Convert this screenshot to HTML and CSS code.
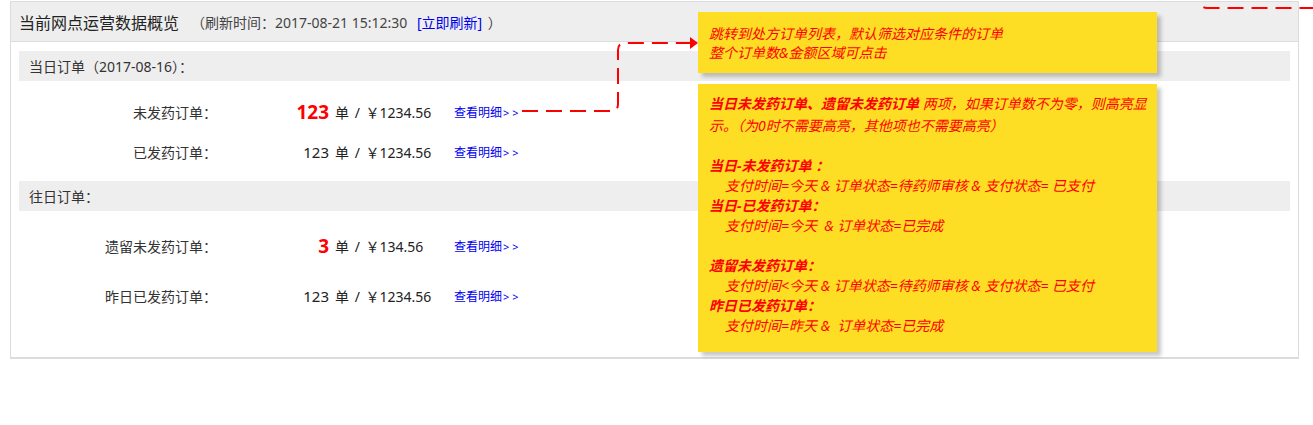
FILE: index.html
```html
<!DOCTYPE html>
<html lang="zh-CN">
<head>
<meta charset="utf-8">
<title>当前网点运营数据概览</title>
<link rel="stylesheet" href="styles.css">
</head>
<body>
<div class="page">
  <div class="panel">
    <div class="panel-head">
      <span class="title">当前网点运营数据概览</span>
      <span class="refresh">（刷新时间：2017-08-21 15:12:30 <a class="refresh-link">[立即刷新]</a> ）</span>
    </div>
    <div class="panel-body">
      <div class="section-bar">当日订单（2017-08-16）：</div>
      <div class="rows rows-today">
        <div class="row">
          <span class="label">未发药订单：</span>
          <span class="count hot">123</span>
          <span class="amount">单 / ￥1234.56</span>
          <a class="detail">查看明细<span class="gt">&gt; &gt;</span></a>
        </div>
        <div class="row">
          <span class="label">已发药订单：</span>
          <span class="count">123</span>
          <span class="amount">单 / ￥1234.56</span>
          <a class="detail">查看明细<span class="gt">&gt; &gt;</span></a>
        </div>
      </div>
      <div class="section-bar">往日订单：</div>
      <div class="rows rows-past">
        <div class="row">
          <span class="label">遗留未发药订单：</span>
          <span class="count hot">3</span>
          <span class="amount">单 / ￥134.56</span>
          <a class="detail">查看明细<span class="gt">&gt; &gt;</span></a>
        </div>
        <div class="row">
          <span class="label">昨日已发药订单：</span>
          <span class="count">123</span>
          <span class="amount">单 / ￥1234.56</span>
          <a class="detail">查看明细<span class="gt">&gt; &gt;</span></a>
        </div>
      </div>
    </div>
  </div>

  <svg class="connectors" width="1313" height="425" viewBox="0 0 1313 425">
    <path d="M522 111 H611 Q618 111 618 104 V50 Q618 43 625 43 H690" fill="none" stroke="#ff0000" stroke-width="2" stroke-dasharray="16 8"/>
    <polygon points="690,37 698,43 690,49" fill="#ff0000"/>
    <path d="M1201 0 V2 Q1201 8 1207 8 H1313" fill="none" stroke="#ff0000" stroke-width="2" stroke-dasharray="16 8" stroke-dashoffset="-8"/>
  </svg>

  <div class="note note-1">
    <div>跳转到处方订单列表，默认筛选对应条件的订单</div>
    <div>整个订单数&amp;金额区域可点击</div>
  </div>

  <div class="note note-2">
    <div class="first"><b>当日未发药订单、遗留未发药订单</b> 两项，如果订单数不为零，则高亮显</div>
    <div>示。（为0时不需要高亮，其他项也不需要高亮）</div>
    <div class="blank"></div>
    <div><b>当日-未发药订单 ：</b></div>
    <div class="indent">支付时间=今天 &amp; 订单状态=待药师审核 &amp; 支付状态= 已支付</div>
    <div><b>当日-已发药订单：</b></div>
    <div class="indent">支付时间=今天 &nbsp;&amp; 订单状态=已完成</div>
    <div class="blank"></div>
    <div><b>遗留未发药订单：</b></div>
    <div class="indent">支付时间&lt;今天 &amp; 订单状态=待药师审核 &amp; 支付状态= 已支付</div>
    <div><b>昨日已发药订单：</b></div>
    <div class="indent">支付时间=昨天 &amp; &nbsp;订单状态=已完成</div>
  </div>
</div>
</body>
</html>
```

FILE: styles.css
```css
html, body {
  margin: 0;
  padding: 0;
  background: #ffffff;
}

body {
  font-family: "Noto Sans", "Noto Sans CJK SC", sans-serif;
  color: #333333;
}

.page {
  position: relative;
  width: 1313px;
  height: 425px;
  padding-top: 1px;
  box-sizing: border-box;
}

.panel {
  margin-left: 10px;
  width: 1289px;
  box-sizing: border-box;
  border: 1px solid #dcdcdc;
  border-bottom-width: 2px;
}

.panel-head {
  height: 39px;
  background: #eeeeee;
  border-bottom: 1px solid #dcdcdc;
  display: flex;
  align-items: center;
  padding-left: 8px;
}

.title {
  font-size: 16px;
  color: #222222;
  margin-right: 12px;
}

.refresh {
  font-size: 14px;
  color: #444444;
}

.refresh-link {
  color: #0000ee;
  margin-left: 6px;
  margin-right: 2px;
}

.panel-body {
  padding: 9px 8px 36px 8px;
}

.section-bar {
  height: 30px;
  background: #eeeeee;
  display: flex;
  align-items: center;
  padding-left: 10px;
  font-size: 14px;
  color: #333333;
}

.rows-today {
  padding-top: 11px;
  padding-bottom: 9px;
}

.rows-past {
  padding-top: 10px;
}

.rows-today .row {
  height: 40px;
}

.rows-past .row {
  height: 50px;
}

.row {
  display: flex;
  align-items: center;
}

.label {
  width: 198px;
  text-align: right;
  font-size: 14px;
  color: #333333;
}

.count {
  width: 112px;
  text-align: right;
  font-size: 15px;
  color: #222222;
}

.count.hot {
  color: #ff0000;
  font-weight: bold;
  font-size: 19px;
}

.amount {
  width: 125px;
  padding-left: 6px;
  box-sizing: border-box;
  font-size: 14px;
  color: #222222;
  white-space: nowrap;
  word-spacing: 2px;
}

.detail {
  font-size: 12px;
  color: #0000ee;
  white-space: nowrap;
}

.gt {
  font-size: 11px;
  margin-left: 1px;
}

.connectors {
  position: absolute;
  left: 0;
  top: 0;
  pointer-events: none;
}

.note {
  position: absolute;
  left: 698px;
  width: 459px;
  box-sizing: border-box;
  background: #fede24;
  box-shadow: 4px 4px 4px rgba(0, 0, 0, 0.22);
  color: #ff0000;
  font-style: italic;
  font-size: 14px;
  line-height: 20px;
  padding-left: 11px;
  white-space: nowrap;
}

.note-1 {
  top: 12px;
  height: 61px;
  padding-top: 12px;
  line-height: 19px;
}

.note-2 {
  top: 84px;
  height: 268px;
  padding-top: 10px;
}

.note-2 .first {
  margin-bottom: 2px;
}

.note b {
  font-weight: bold;
}

.note .blank {
  height: 20px;
}

.note .indent {
  padding-left: 16px;
}
```
